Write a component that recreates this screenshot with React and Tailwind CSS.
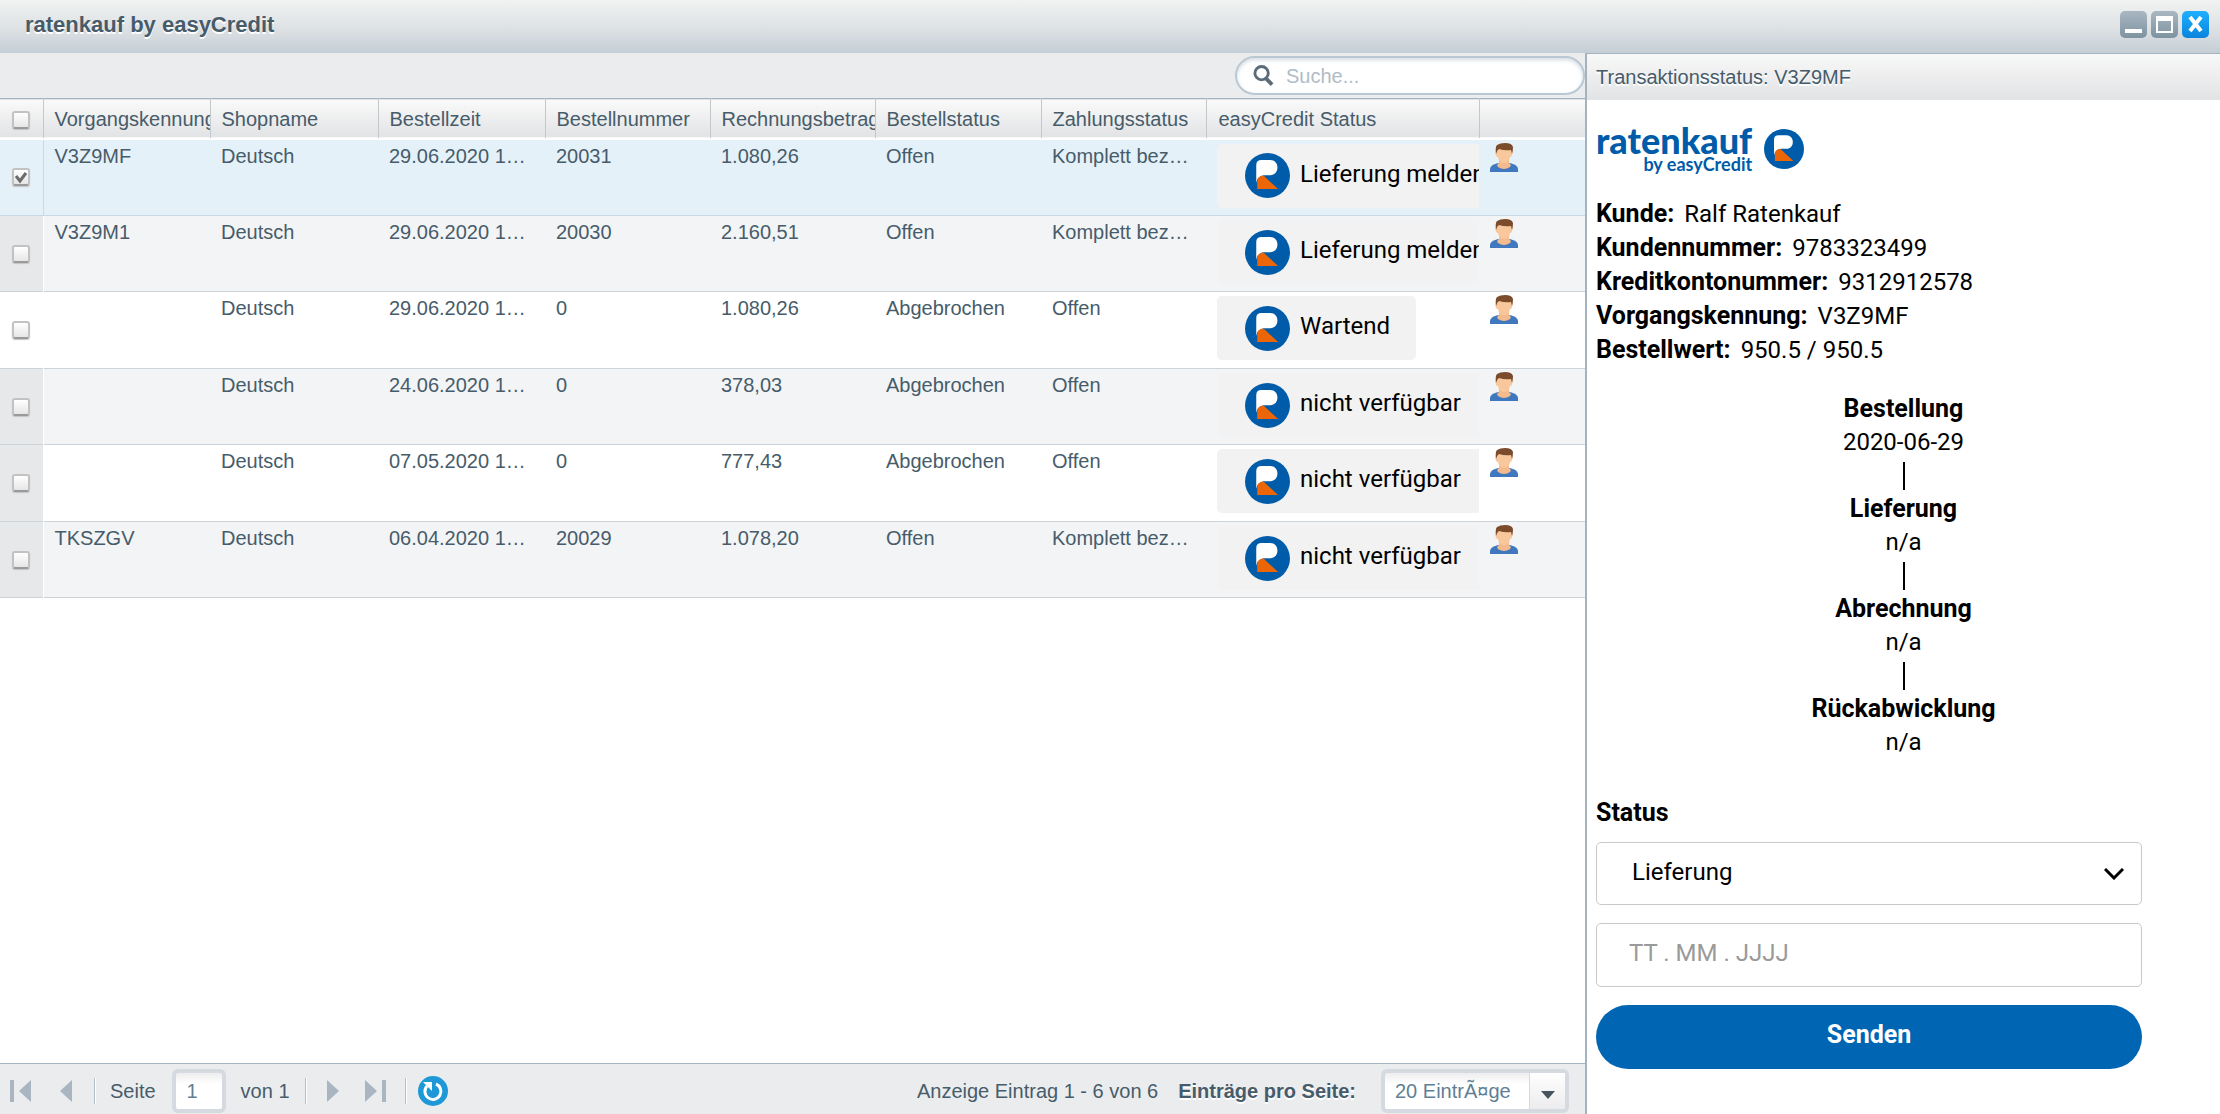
import React from "react";

const COLUMNS = [
  { label: "Vorgangskennung", key: "id" },
  { label: "Shopname", key: "shop" },
  { label: "Bestellzeit", key: "time" },
  { label: "Bestellnummer", key: "number" },
  { label: "Rechnungsbetrag", key: "amount" },
  { label: "Bestellstatus", key: "order" },
  { label: "Zahlungsstatus", key: "payment" },
];

const ROWS = [
  { id: "V3Z9MF", shop: "Deutsch", time: "29.06.2020 1…", number: "20031", amount: "1.080,26", order: "Offen", payment: "Komplett bez…", status: "Lieferung melden", selected: true },
  { id: "V3Z9M1", shop: "Deutsch", time: "29.06.2020 1…", number: "20030", amount: "2.160,51", order: "Offen", payment: "Komplett bez…", status: "Lieferung melden", shaded: true },
  { id: "", shop: "Deutsch", time: "29.06.2020 1…", number: "0", amount: "1.080,26", order: "Abgebrochen", payment: "Offen", status: "Wartend" },
  { id: "", shop: "Deutsch", time: "24.06.2020 1…", number: "0", amount: "378,03", order: "Abgebrochen", payment: "Offen", status: "nicht verfügbar", shaded: true },
  { id: "", shop: "Deutsch", time: "07.05.2020 1…", number: "0", amount: "777,43", order: "Abgebrochen", payment: "Offen", status: "nicht verfügbar", shaded: true },
  { id: "TKSZGV", shop: "Deutsch", time: "06.04.2020 1…", number: "20029", amount: "1.078,20", order: "Offen", payment: "Komplett bez…", status: "nicht verfügbar", shaded: true },
];

const DETAILS = [
  ["Kunde:", "Ralf Ratenkauf"],
  ["Kundennummer:", "9783323499"],
  ["Kreditkontonummer:", "9312912578"],
  ["Vorgangskennung:", "V3Z9MF"],
  ["Bestellwert:", "950.5 / 950.5"],
];

const STEPS = [
  ["Bestellung", "2020-06-29"],
  ["Lieferung", "n/a"],
  ["Abrechnung", "n/a"],
  ["Rückabwicklung", "n/a"],
];

function BrandMark({ className }) {
  return (
    <svg viewBox="0 0 136 136" className={className} aria-hidden="true">
      <circle cx="68" cy="68" r="68" fill="#005ca9" />
      <path d="M34 90V36Q34 21 50 21H76C90 21 98 31 98 44S90 67 76 67H57Q45 68 37 80Z" fill="#fff" />
      <path d="M37 109V84Q37 70 56 68L100 109Z" fill="#ec6608" />
    </svg>
  );
}

function PersonIcon() {
  return (
    <svg viewBox="0 0 28 29" className="h-[29px] w-7" role="img" aria-label="Kunde">
      <path d="M0 29V26Q0 22 8 20L20 20Q28 22 28 26V29Z" fill="#3f78bf" />
      <path d="M9 17H19V20Q22 22 20 24Q14 28 8 24Q6 22 9 20Z" fill="#f2ba8d" />
      <path d="M6 8Q5 9 6 13Q7 14 8 14Q9 20 14 20Q19 20 20 14Q22 14 22 12Q23 9 22 8V5H6Z" fill="#f8c79b" />
      <path d="M6 11Q5 4 7 2Q10 0 15 0Q22 0 23 4Q23 8 22 11L21 7Q15 8 9 6Q7 7 6 11Z" fill="#7b4c2c" />
    </svg>
  );
}

function CheckBox({ label, checked }) {
  return (
    <span className="relative mx-auto block h-[18px] w-[18px]">
      <input
        type="checkbox"
        aria-label={label}
        defaultChecked={checked}
        className="peer block h-[18px] w-[18px] appearance-none rounded-[3px] border-2 border-[#c2c2c2] border-b-[#9a9a9a] bg-linear-to-b from-white to-[#e6e6e6] shadow-[0_1px_1px_#c4c4c4]"
      />
      <svg viewBox="0 0 18 18" className="pointer-events-none absolute inset-0 hidden peer-checked:block" aria-hidden="true">
        <path d="M4 8L8 13L14 5" fill="none" stroke="#6b6b6b" strokeWidth="3" />
      </svg>
    </span>
  );
}

function TitleBar() {
  return (
    <header className="flex h-[53px] shrink-0 items-center justify-between bg-linear-to-b from-[#f1f2f2] via-[#dfe3e5] to-[#c5ced6] pr-[11px] pb-1 pl-[25px]">
      <h1 className="text-[22px] font-bold [text-shadow:0_2px_0_#fff]">ratenkauf by easyCredit</h1>
      <div className="flex gap-1">
        <button aria-label="Minimieren" className="h-[27px] w-[27px] rounded-[5px] bg-linear-to-b from-[#a9b7c1] to-[#7f93a1]">
          <svg viewBox="0 0 27 27"><path d="M5 18H22V22H5Z" fill="#fff" /></svg>
        </button>
        <button aria-label="Maximieren" className="h-[27px] w-[27px] rounded-[5px] bg-linear-to-b from-[#a9b7c1] to-[#7f93a1]">
          <svg viewBox="0 0 27 27"><path fillRule="evenodd" d="M5 5H22V22H5ZM7 10V20H20V10Z" fill="#fff" /></svg>
        </button>
        <button aria-label="Schließen" className="h-[27px] w-[27px] rounded-[5px] bg-linear-to-b from-[#1fb0ff] to-[#0a84dc]">
          <svg viewBox="0 0 27 27"><path d="M8 6L19 20M19 6L8 20" stroke="#fff" strokeWidth="4" /></svg>
        </button>
      </div>
    </header>
  );
}

function SearchBar() {
  return (
    <div className="flex h-[45px] shrink-0 justify-end bg-[#ebecee] pt-[3px]">
      <label className="flex h-[39px] w-[350px] items-center gap-3 rounded-full border-2 border-[#bac8d3] bg-white pl-4 shadow-[inset_0_2px_4px_#d5dce2]">
        <svg viewBox="0 0 22 24" className="h-6 w-[21px]" fill="none" stroke="#5b6b78" aria-hidden="true">
          <circle cx="9" cy="9" r="7" strokeWidth="3" />
          <path d="M13 14L20 21" strokeWidth="4" />
        </svg>
        <input type="search" aria-label="Suche" placeholder="Suche..." className="min-w-0 flex-1 bg-transparent outline-none placeholder:text-[#b0bcc6]" />
      </label>
    </div>
  );
}

function markerCell(row) {
  if (row.selected) return "border-r border-[#c8dae6] p-0";
  if (row.shaded) return "border-r border-white bg-[#e7e8ea] p-0";
  return "border-r border-white p-0";
}

function OrderTable() {
  return (
    <table className="w-full table-fixed border-collapse text-left">
      <colgroup>
        <col className="w-[43px]" />
        <col className="w-[167px]" />
        <col className="w-[168px]" />
        <col className="w-[167px]" />
        <col className="w-[165px]" />
        <col className="w-[165px]" />
        <col className="w-[166px]" />
        <col className="w-[165px]" />
        <col className="w-[273px]" />
        <col className="w-[106px]" />
      </colgroup>
      <thead>
        <tr className="h-10 border-t border-b-2 border-t-[#a3b4c0] border-b-white bg-linear-to-b from-[#fafafa] to-[#e2e3e5]">
          <th className="border-r border-[#c3c8cc] p-0 pt-1"><CheckBox label="Alle auswählen" /></th>
          {COLUMNS.map((c) => (
            <th key={c.key} className="overflow-hidden border-r border-[#c3c8cc] p-0 pt-0.5 pl-[11px] font-normal whitespace-nowrap">{c.label}</th>
          ))}
          <th className="border-r border-[#c3c8cc] p-0 pt-0.5 pl-3 font-normal whitespace-nowrap">easyCredit Status</th>
          <th aria-label="Kunde" className="p-0" />
        </tr>
      </thead>
      <tbody>
        {ROWS.map((r, i) => (
          <tr
            key={i}
            className={
              r.selected
                ? "h-[77px] border-b border-[#c8dae6] bg-[#e5f1f8]"
                : "h-[77px] border-b border-[#ccd4da] bg-white even:h-[76px] even:bg-[#f3f4f6] last:h-[77px]"
            }
          >
            <td className={markerCell(r)}>
              <CheckBox label={"Zeile " + (i + 1)} checked={r.selected} />
            </td>
            {COLUMNS.map((c) => (
              <td key={c.key} className="p-0 pt-1 pl-[11px] align-top leading-6 whitespace-nowrap">{r[c.key]}</td>
            ))}
            <td className="overflow-hidden p-0 pt-1 pl-[11px] align-top">
              <button className="flex h-16 items-center gap-[10px] rounded-[5px] bg-[#f2f2f2] pr-[26px] pl-7 font-['Roboto',sans-serif] text-[24px] whitespace-nowrap text-black">
                <BrandMark className="h-[45px] w-[45px] shrink-0" />
                <span className="pb-1">{r.status}</span>
              </button>
            </td>
            <td className="p-0 pt-[3px] pl-[11px] align-top">
              <button className="block"><PersonIcon /></button>
            </td>
          </tr>
        ))}
      </tbody>
    </table>
  );
}

function Separator() {
  return <span className="h-[26px] w-px bg-[#b3bfc9] shadow-[1px_0_0_#fff]" />;
}

function PageButton({ label, d, className }) {
  return (
    <button aria-label={label} className={className}>
      <svg viewBox="0 0 22 24" className="h-6 w-[22px]" aria-hidden="true">
        <path d={d} fill="#a9b6c1" />
      </svg>
    </button>
  );
}

function Pager() {
  return (
    <footer className="flex h-[51px] shrink-0 items-center border-t border-[#a3b4c0] bg-[#ebecee] pt-1 pr-4 pl-[10px] whitespace-nowrap">
      <PageButton label="Erste Seite" d="M0 1H4V23H0ZM21 1V23L9 12Z" />
      <PageButton label="Vorherige Seite" d="M17 1V23L5 12Z" className="mr-[17px] ml-[23px]" />
      <Separator />
      <label className="ml-[15px] flex items-center gap-4">
        Seite
        <input type="text" defaultValue="1" className="h-11 w-[54px] rounded-md border-4 border-[#d5dae1] bg-linear-to-b from-[#ededed] via-white via-30% to-white pl-[11px] text-[#5f7f94]" />
      </label>
      <span className="mr-[15px] ml-[15px]">von 1</span>
      <Separator />
      <PageButton label="Nächste Seite" d="M5 1V23L17 12Z" className="mr-[21px] ml-4" />
      <PageButton label="Letzte Seite" d="M0 1V23L12 12ZM17 1H21V23H17Z" />
      <span className="ml-[18px] flex"><Separator /></span>
      <button aria-label="Aktualisieren" className="ml-3">
        <svg viewBox="0 0 30 30" className="h-[30px] w-[30px]" aria-hidden="true">
          <circle cx="15" cy="15" r="15" fill="#1e98d7" />
          <path d="M18 8A8 8 0 1 1 9 10" fill="none" stroke="#fff" strokeWidth="3" />
          <path d="M5 6H14V15Z" fill="#fff" />
        </svg>
      </button>
      <span className="mr-5 ml-auto">Anzeige Eintrag 1 - 6 von 6</span>
      <label htmlFor="page-size" className="mr-[25px] font-bold [text-shadow:0_2px_0_#fff]">Einträge pro Seite:</label>
      <span className="relative flex h-11 w-[188px] items-center rounded-md border-4 border-[#d5dae1] bg-linear-to-b from-[#ededed] via-white via-30% to-white">
        <select id="page-size" className="h-full w-full appearance-none bg-transparent pl-[10px] text-[#5f7f94]">
          <option>20 EintrÃ¤ge</option>
        </select>
        <span className="pointer-events-none absolute inset-y-0 right-0 flex w-9 items-center justify-center border-l border-[#d5dae1] bg-linear-to-b from-white to-[#ececee] pt-2">
          <svg viewBox="0 0 14 8" className="h-2 w-[14px]" aria-hidden="true"><path d="M0 0H14L7 8Z" fill="#47545e" /></svg>
        </span>
      </span>
    </footer>
  );
}

function DetailPanel() {
  return (
    <aside className="flex w-[635px] shrink-0 flex-col border-l-2 border-[#a3b4c0] bg-white">
      <h2 className="flex h-[47px] shrink-0 items-center border-t border-[#a3b4c0] bg-linear-to-b from-[#f8f8f8] to-[#e2e3e5] pl-[9px] [text-shadow:0_2px_0_#fff]">
        Transaktionsstatus: V3Z9MF
      </h2>
      <div className="pr-[78px] pl-[9px] font-['Roboto',sans-serif] text-[24px] leading-[34px] text-black">
        <div className="flex items-start gap-3 pt-6">
          <div className="text-right font-['Lato',sans-serif] font-black text-[#005ca9]">
            <p className="text-[36px] leading-8">ratenkauf</p>
            <p className="text-[18px] leading-4 font-bold">by easyCredit</p>
          </div>
          <BrandMark className="mt-[5px] h-10 w-10" />
        </div>
        <dl className="mt-[25px] leading-[34px]">
          {DETAILS.map(([k, v]) => (
            <div key={k} className="flex gap-[10px]">
              <dt className="text-[25px] font-bold">{k}</dt>
              <dd>{v}</dd>
            </div>
          ))}
        </dl>
      </div>
      <ol className="mt-[25px] text-center font-['Roboto',sans-serif] text-[24px] text-black">
        {STEPS.map(([k, v], i) => (
          <li key={k}>
            {i > 0 && <div className="flex h-[33px] items-center justify-center"><span className="h-7 w-0.5 bg-black" /></div>}
            <div className="text-[25px] leading-[34px] font-bold">{k}</div>
            <div className="leading-[33px]">{v}</div>
          </li>
        ))}
      </ol>
      <form className="mt-[37px] pr-[78px] pl-[9px] font-['Roboto',sans-serif] text-[24px] text-black">
        <label htmlFor="status" className="block text-[25px] leading-[34px] font-bold">Status</label>
        <div className="relative mt-3">
          <select id="status" className="block h-[63px] w-full appearance-none rounded-[5px] border border-[#c9c9c9] bg-white pb-1 pl-[35px]">
            <option>Lieferung</option>
          </select>
          <svg viewBox="0 0 20 12" className="pointer-events-none absolute top-[26px] right-[18px] h-3 w-5" fill="none" stroke="#000" strokeWidth="3" aria-hidden="true">
            <path d="M1 1L10 10L19 1" />
          </svg>
        </div>
        <input type="text" aria-label="Datum" placeholder="TT . MM . JJJJ" className="mt-[18px] block h-16 w-full rounded-[5px] border border-[#c9c9c9] bg-white pb-1 pl-8 placeholder:text-[#9a9a9a]" />
        <button type="button" className="mt-[18px] block h-16 w-full rounded-full bg-[#0066b3] pb-1 text-[25px] font-bold text-white">Senden</button>
      </form>
    </aside>
  );
}

export default function App() {
  return (
    <div className="flex h-screen flex-col overflow-hidden bg-white font-['Liberation_Sans',Arial,sans-serif] text-[20px] text-[#475c6a]">
      <TitleBar />
      <main className="flex min-h-0 flex-1">
        <section className="flex min-w-0 flex-1 flex-col">
          <SearchBar />
          <div className="min-h-0 flex-1 overflow-auto"><OrderTable /></div>
          <Pager />
        </section>
        <DetailPanel />
      </main>
    </div>
  );
}
